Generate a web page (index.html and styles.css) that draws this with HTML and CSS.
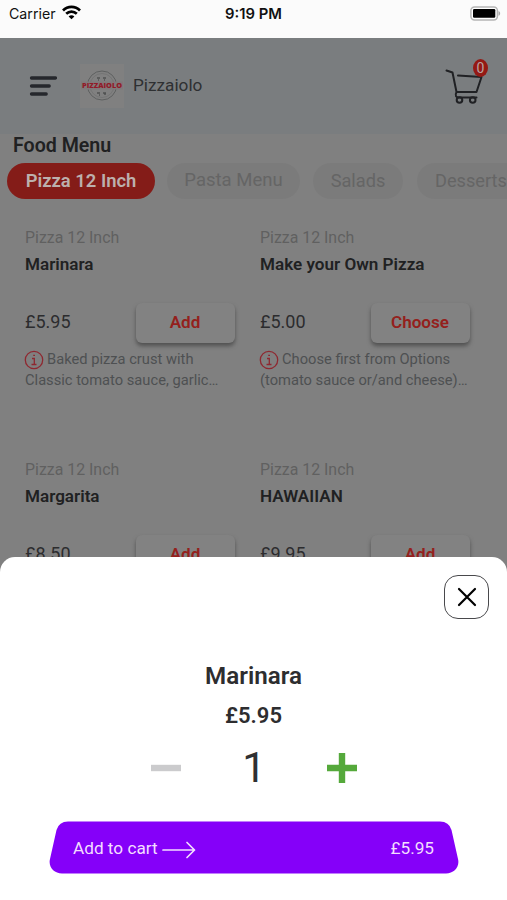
FILE: index.html
```html
<!DOCTYPE html>
<html lang="en">
<head>
<meta charset="utf-8">
<title>Pizzaiolo</title>
<link rel="stylesheet" href="styles.css">
</head>
<body>
<div class="phone">
  <div class="status">
    <div class="carrier"><span>Carrier</span>
      <svg width="19" height="15" viewBox="0 0 19 15" fill="none" stroke="#000" stroke-width="2.7"><path d="M1 5.500C5.800.7 13.200.7 18 5.500"/><path d="M4.200 8.700c3-2.900 7.600-2.900 10.600 0"/><path d="M9.500 14.300 6.600 11.400c1.700-1.500 4.100-1.500 5.800 0z" fill="#000" stroke="none"/></svg>
    </div>
    <div class="clock">9:19 PM</div>
    <svg class="battery" width="31" height="15" viewBox="0 0 31 15"><rect x=".9" y=".9" width="26.500" height="13" rx="3.600" fill="#fff" stroke="#b5b5b5" stroke-width="1.500"/><rect x="3" y="3" width="22.300" height="8.800" rx="1.200"/><path d="M28.500 5c2.200.8 2.200 4 0 4.800z" fill="#aaa"/></svg>
  </div>
  <header class="header">
    <svg class="menu" width="28" height="20" viewBox="0 0 28 20" stroke="#25272c" stroke-width="3.300" stroke-linecap="round"><path d="M2.500 2H26.500M2.500 10H20.200M2.500 18H17.200"/></svg>
    <svg class="logo" width="44" height="44" viewBox="0 0 44 44"><rect width="44" height="44" fill="#808080"/><circle cx="22" cy="21.500" r="14.500" fill="none" stroke="#5e6060" stroke-width="1"/><circle cx="22" cy="21.500" r="12" fill="none" stroke="#6b6d6d" stroke-width=".6"/><path d="M17 14h3m3 0h3M18 16h1m5 0h1M17 29h3m3 0h3M19 31h1m4-1h2" stroke="#505252" stroke-width="1.500"/><rect x="1" y="17.500" width="42" height="8" fill="#80797a"/><text x="22" y="24.200" text-anchor="middle" textLength="40" lengthAdjust="spacingAndGlyphs" class="logo-text">PIZZAIOLO</text></svg>
    <div class="brand">Pizzaiolo</div>
    <div class="cart">
      <svg width="39" height="37" viewBox="0 0 39 37" fill="none" stroke="#202124" stroke-width="2" stroke-linecap="round" stroke-linejoin="round"><path d="M1.500 2.500 7.500 4.500 11.500 24H31.500L36.500 9M13 7.500 36.500 9M11.500 24c-2 4 0 5.500 2 5.500H31.500"/><circle cx="14.500" cy="32" r="2.800"/><circle cx="27.700" cy="32" r="2.800"/></svg>
      <span class="badge">0</span>
    </div>
  </header>
  <main>
    <h1>Food Menu</h1>
    <nav class="tabs"><span class="tab active">Pizza 12 Inch</span><span class="tab pasta">Pasta Menu</span><span class="tab salads">Salads</span><span class="tab desserts">Desserts</span></nav>
    <div class="grid">
      <article>
        <div class="category">Pizza 12 Inch</div><h2>Marinara</h2>
        <div class="buy"><span>£5.95</span><button>Add</button></div>
        <p><svg class="info" width="20" height="20" viewBox="0 0 20 20" fill="none" stroke="#8e2830" stroke-width="1.300"><circle cx="10" cy="10" r="8.700"/><path d="M8 8.500h2.300v6M7.500 14.500h5M9.200 5.400h1.800" stroke-width="1.300"/></svg>Baked pizza crust with<br>Classic tomato sauce, garlic…</p>
      </article>
      <article>
        <div class="category">Pizza 12 Inch</div><h2>Make your Own Pizza</h2>
        <div class="buy"><span>£5.00</span><button>Choose</button></div>
        <p><svg class="info" width="20" height="20" viewBox="0 0 20 20" fill="none" stroke="#8e2830" stroke-width="1.300"><circle cx="10" cy="10" r="8.700"/><path d="M8 8.500h2.300v6M7.500 14.500h5M9.200 5.400h1.800" stroke-width="1.300"/></svg>Choose first from Options<br>(tomato sauce or/and cheese)…</p>
      </article>
      <article>
        <div class="category">Pizza 12 Inch</div><h2>Margarita</h2>
        <div class="buy"><span>£8.50</span><button>Add</button></div>
      </article>
      <article>
        <div class="category">Pizza 12 Inch</div><h2>HAWAIIAN</h2>
        <div class="buy"><span>£9.95</span><button>Add</button></div>
      </article>
    </div>
  </main>
  <section class="sheet">
    <div class="close-row"><button class="close" aria-label="Close"><svg width="20" height="20" viewBox="0 0 20 20" stroke="#000" stroke-width="2.200" stroke-linecap="round"><path d="M2 2 18 18M18 2 2 18"/></svg></button></div>
    <div class="product">Marinara</div>
    <div class="price">£5.95</div>
    <div class="quantity">
      <svg width="30" height="30" viewBox="0 0 30 30"><path d="M0 11.800h30v6.400H0z" fill="#cbcbcd"/></svg>
      <span>1</span>
      <svg width="30" height="30" viewBox="0 0 30 30"><path d="M11.800 0h6.400v11.800H30v6.400H18.200V30h-6.400V18.200H0v-6.400h11.800z" fill="#55a93b"/></svg>
    </div>
    <div class="add">
      <svg class="shape" width="410" height="53" viewBox="0 0 410 53"><path d="M19 .5H391Q400 .5 402.500 9L409 38C411 46 405 52.500 397 52.500H13C5 52.500-1 46 1 38L7.500 9Q10 .5 19 .5Z" fill="#8500f9"/></svg>
      <div class="add-content"><span>Add to cart</span><svg width="34" height="18" viewBox="0 0 34 18" fill="none" stroke="#f3ddff" stroke-width="1.700" stroke-linecap="round" stroke-linejoin="round"><path d="M1 9H32.500M25 1.500 32.500 9 25 16.500"/></svg><span class="total">£5.95</span></div>
    </div>
  </section>
</div>
</body>
</html>
```
FILE: styles.css
```css
* { box-sizing: border-box; }
body { margin: 0; font-family: Roboto, "Liberation Sans", sans-serif; color: #202122; }
button { font-family: inherit; border: 0; padding: 0; }
svg { display: block; flex-shrink: 0; }
h1, h2, p { margin: 0; }
.phone { position: relative; width: 507px; height: 900px; overflow: hidden; background: #808080; }
.status { height: 38px; background: #fbfbfb; display: grid; grid-template-columns: 1fr auto 1fr; padding: 4px 6px 0 9px; font-family: Inter, sans-serif; font-size: 14px; line-height: 20px; color: #111; }
.carrier { display: flex; gap: 6px; font-size: 14.2px; }
.carrier svg { margin-top: 1px; }
.clock { font-weight: 600; font-size: 14.8px; margin-left: -3px; }
.battery { justify-self: end; margin-top: 2px; }
.header { height: 96px; background: #7a7d7f; display: flex; align-items: center; padding: 0 17px 0 29px; }
.logo { margin-left: 23px; }
.logo-text { font: 900 7.5px "Open Sans", sans-serif; fill: #921b29; }
.brand { margin: -2px 0 0 9px; font-size: 17.2px; color: #2e3032; }
.cart { position: relative; margin-left: auto; width: 45px; height: 37px; }
.badge { position: absolute; left: 28px; top: -9px; width: 15px; height: 18px; border-radius: 50%; background: #941914; color: #b9a4a3; font-size: 14px; line-height: 18px; text-align: center; }
h1 { height: 29px; padding-left: 13px; font-size: 19.6px; line-height: 24px; font-weight: 600; }
.tabs { display: flex; height: 36px; padding-left: 7px; }
.tab { flex: none; height: 36px; border-radius: 18px; background: #7b7b7b; color: #656565; font-size: 18.2px; line-height: 35px; text-align: center; }
.tab.active { width: 148px; background: #841c18; color: #bcb0ad; font-size: 18.4px; font-weight: 600; }
.pasta { width: 133px; margin-left: 12px; font-size: 18.5px; }
.salads { width: 90px; margin-left: 13px; }
.desserts { width: 108px; margin-left: 14px; }
.grid { display: grid; grid-template-columns: 210px 210px; grid-template-rows: 232px 232px; column-gap: 25px; padding: 29px 25px 0; }
.category { font-size: 15.9px; line-height: 20px; color: #606060; }
h2 { font-size: 17.1px; line-height: 24px; font-weight: 600; margin-top: 4px; }
.buy { display: flex; height: 40px; margin-top: 27px; align-items: center; justify-content: space-between; font-size: 18px; color: #2c2c2e; }
.buy span { margin-top: -3px; }
.buy button { width: 99px; height: 40px; padding: 0 1px 2px 0; border-radius: 6px; background: #828282; color: #94201c; font-size: 17.1px; font-weight: 600; box-shadow: 0 3px 4px #505050; }
p { margin-top: 6px; font-size: 14.7px; line-height: 21px; color: #4e5052; white-space: nowrap; }
.info { display: inline-block; vertical-align: -5px; margin: -2px 3px -1px -1px; }
.sheet { position: absolute; bottom: 0; left: 0; width: 507px; height: 343px; padding-top: 18px; border-radius: 15px 15px 0 0; background: #fff; text-align: center; }
.close-row { display: flex; justify-content: flex-end; padding-right: 18px; }
.close { display: grid; place-items: center; width: 45px; height: 44px; border: 1.5px solid #49494c; border-radius: 14px; background: #fff; }
.product { margin-top: 41px; font-size: 24.2px; line-height: 32px; font-weight: 600; color: #2d2d2f; }
.price { margin-top: 10px; font-size: 22px; line-height: 28px; font-weight: 600; color: #2d2d2f; }
.quantity { display: flex; width: 206px; height: 50px; margin: 13px 0 0 151px; align-items: center; justify-content: space-between; font-size: 42px; line-height: 50px; color: #303032; }
.add { position: relative; width: 410px; height: 53px; margin: 28px 0 0 49px; }
.shape { position: absolute; inset: 0; }
.add-content { position: relative; display: flex; height: 53px; align-items: center; padding: 0 25px 0 24px; font-size: 17.2px; line-height: 24px; color: #f3ddff; }
.add-content svg { margin: 5px 0 0 4px; }
.total { margin-left: auto; }
```
